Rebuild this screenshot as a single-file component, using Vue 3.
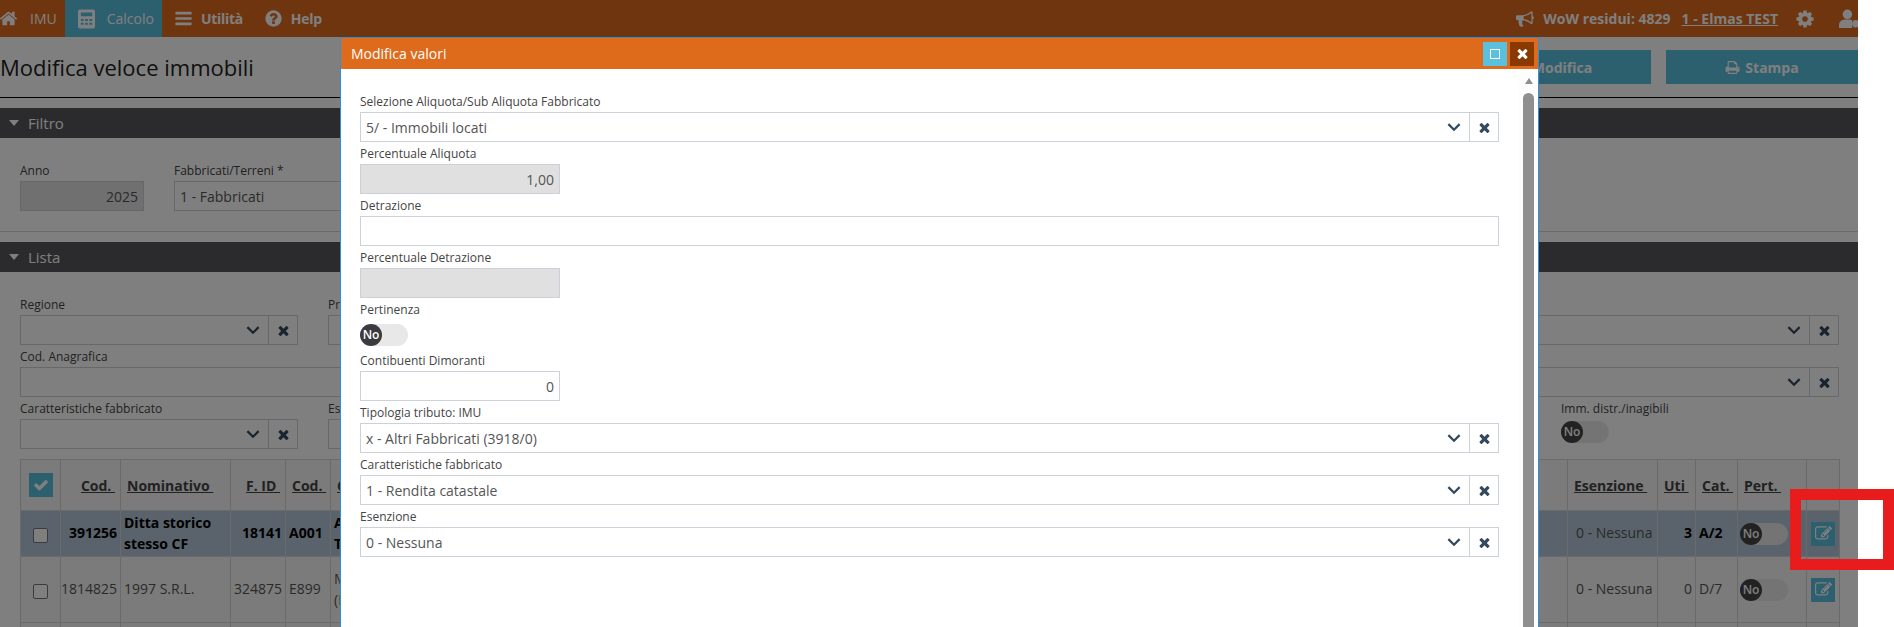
<template>
  <div class="page">
    <!-- Top navigation -->
    <header class="nav">
      <a class="nav__item nav__item--first"><svg class="ico ico--home" viewBox="0 0 1792 1792"><path :d="icons.home" /></svg><span>IMU</span></a>
      <a class="nav__item nav__item--active">
        <svg class="ico ico--calc" viewBox="0 0 18 20"><path fill-rule="evenodd" d="M2 0h14a2 2 0 0 1 2 2v16a2 2 0 0 1-2 2H2a2 2 0 0 1-2-2V2a2 2 0 0 1 2-2zM3 3v4h12V3zM3 10v2h3v-2zM7.500 10v2h3v-2zM12 10v2h3v-2zM3 14v2h3v-2zM7.500 14v2h3v-2zM12 14v2h3v-2z" /></svg>
        <span>Calcolo</span>
      </a>
      <a class="nav__item nav__item--bold"><svg class="ico" viewBox="0 0 1792 1792"><path :d="icons.bars" /></svg><span>Utilità</span></a>
      <a class="nav__item nav__item--bold"><svg class="ico" viewBox="0 0 1792 1792"><path :d="icons.help" /></svg><span>Help</span></a>
      <div class="nav__right">
        <svg class="ico ico--horn" viewBox="0 0 1792 1792"><path :d="icons.horn" /></svg>
        <strong class="nav__wow">WoW residui: 4829</strong>
        <a class="nav__user">1 - Elmas TEST</a>
        <svg class="ico ico--cog" viewBox="0 0 1792 1792"><path :d="icons.cog" /></svg>
        <svg class="ico ico--usercog" viewBox="0 0 20 18"><circle cx="8" cy="5" r="4.500" /><path d="M0 18v-2.500C0 12 3 10 6 10h4c1 0 2 .3 2.500 .7V18z" /><circle cx="16" cy="14" r="3.500" /></svg>
      </div>
    </header>

    <!-- Title and actions -->
    <div class="head">
      <h1 class="head__title">Modifica veloce immobili</h1>
      <div class="head__actions">
        <button class="action"><svg class="ico ico--pencil" viewBox="0 0 1792 1792"><path :d="icons.edit" /></svg>Modifica</button>
        <button class="action"><svg class="ico ico--print" viewBox="0 0 1792 1792"><path :d="icons.print" /></svg>Stampa</button>
      </div>
    </div>

    <!-- Filtro -->
    <section class="panel panel--filter">
      <h2 class="bar"><i class="bar__caret"></i>Filtro</h2>
      <div class="filter-row">
        <div class="field field--anno">
          <label>Anno</label>
          <div class="input input--off input--num">2025</div>
        </div>
        <div class="field field--tipo">
          <label>Fabbricati/Terreni *</label>
          <div class="input">1 - Fabbricati</div>
        </div>
      </div>
    </section>

    <!-- Lista -->
    <section class="panel">
      <h2 class="bar"><i class="bar__caret"></i>Lista</h2>
      <div class="list-filters">
        <div class="list-row">
          <div class="field field--side">
            <label>Regione</label>
            <div class="select"><div class="select__value"></div><span class="select__arrow"><svg viewBox="0 0 12 8"><path d="M1 1l5 5 5-5" /></svg></span><span class="select__clear"><svg viewBox="0 0 1792 1792"><path :d="icons.times" /></svg></span></div>
          </div>
          <div class="field field--grow">
            <label>Provincia</label>
            <div class="select"><div class="select__value"></div><span class="select__arrow"><svg viewBox="0 0 12 8"><path d="M1 1l5 5 5-5" /></svg></span><span class="select__clear"><svg viewBox="0 0 1792 1792"><path :d="icons.times" /></svg></span></div>
          </div>
        </div>
        <div class="list-row">
          <div class="field field--code">
            <label>Cod. Anagrafica</label>
            <div class="input"></div>
          </div>
          <div class="field field--grow">
            <label>Comune</label>
            <div class="select"><div class="select__value"></div><span class="select__arrow"><svg viewBox="0 0 12 8"><path d="M1 1l5 5 5-5" /></svg></span><span class="select__clear"><svg viewBox="0 0 1792 1792"><path :d="icons.times" /></svg></span></div>
          </div>
        </div>
        <div class="list-row">
          <div class="field field--side">
            <label>Caratteristiche fabbricato</label>
            <div class="select"><div class="select__value"></div><span class="select__arrow"><svg viewBox="0 0 12 8"><path d="M1 1l5 5 5-5" /></svg></span><span class="select__clear"><svg viewBox="0 0 1792 1792"><path :d="icons.times" /></svg></span></div>
          </div>
          <div class="field field--grow">
            <label>Esenzione</label>
            <div class="select"><div class="select__value"></div><span class="select__arrow"><svg viewBox="0 0 12 8"><path d="M1 1l5 5 5-5" /></svg></span><span class="select__clear"><svg viewBox="0 0 1792 1792"><path :d="icons.times" /></svg></span></div>
          </div>
          <div class="field field--toggle">
            <label>Imm. distr./inagibili</label>
            <div class="toggle"><span class="toggle__knob">No</span></div>
          </div>
        </div>
      </div>

      <table class="grid">
        <colgroup>
          <col v-for="(w, i) in colWidths" :key="i" :style="{ width: w + 'px' }" />
        </colgroup>
        <thead>
          <tr>
            <th class="c"><span class="check-all"><svg viewBox="0 0 1792 1792"><path :d="icons.check" /></svg></span></th>
            <th class="r"><u>Cod.&nbsp;</u></th>
            <th><u>Nominativo&nbsp;</u></th>
            <th class="r"><u>F. ID&nbsp;</u></th>
            <th><u>Cod.&nbsp;</u></th>
            <th><u>Contribuente&nbsp;</u></th>
            <th><u>Esenzione&nbsp;</u></th>
            <th><u>Uti&nbsp;</u></th>
            <th><u>Cat.&nbsp;</u></th>
            <th><u>Pert.&nbsp;</u></th>
            <th></th>
          </tr>
        </thead>
        <tbody>
          <tr v-for="(row, idx) in rows" :key="idx" :class="{ 'is-selected': row.selected }" :style="{ height: row.height + 'px' }">
            <td class="c"><span v-if="row.id" class="check"></span></td>
            <td class="r">{{ row.id }}</td>
            <td>{{ row.name }}</td>
            <td class="r">{{ row.fid }}</td>
            <td>{{ row.code }}</td>
            <td class="addr">{{ row.address }}</td>
            <td class="muted">{{ row.exempt }}</td>
            <td class="r">{{ row.uti }}</td>
            <td>{{ row.cat }}</td>
            <td class="pert"><div v-if="row.id" class="toggle"><span class="toggle__knob">No</span></div></td>
            <td class="c"><span v-if="row.id" class="edit"><svg viewBox="0 0 1792 1792"><path :d="icons.edit" /></svg></span></td>
          </tr>
        </tbody>
      </table>
    </section>

    <div class="overlay"></div>

    <!-- Dialog -->
    <div class="modal">
      <div class="modal__head">
        <span class="modal__title">Modifica valori</span>
        <span class="modal__btn modal__btn--max"><i></i></span>
        <span class="modal__btn modal__btn--close"><svg viewBox="0 0 1792 1792"><path :d="icons.times" /></svg></span>
      </div>
      <div class="modal__body">
        <div class="modal__form">
          <template v-for="f in modalFields" :key="f.label">
            <div class="field" :class="{ 'field--small': f.type === 'small' || f.type === 'off' }">
              <label>{{ f.label }}</label>
              <div v-if="f.type === 'select'" class="select">
                <div class="select__value">{{ f.value }}</div>
                <span class="select__arrow"><svg viewBox="0 0 12 8"><path d="M1 1l5 5 5-5" /></svg></span>
                <span class="select__clear"><svg viewBox="0 0 1792 1792"><path :d="icons.times" /></svg></span>
              </div>
              <div v-else-if="f.type === 'toggle'" class="toggle toggle--form"><span class="toggle__knob">No</span></div>
              <div v-else class="input" :class="{ 'input--off': f.type === 'off', 'input--num': f.type !== 'text' }">{{ f.value }}</div>
            </div>
          </template>
        </div>
        <div class="modal__rail">
          <i class="modal__up"></i>
          <div class="modal__thumb"></div>
        </div>
      </div>
    </div>

    <!-- Red marker drawn over the screenshot -->
    <div class="marker"></div>
  </div>
</template>

<script setup>
const icons = {
  home: 'M1472 992v480q0 26-19 45t-45 19h-384v-384h-256v384h-384q-26 0-45-19t-19-45v-480q0-1 .5-3t.5-3l575-474 575 474q1 2 1 6zm223-69l-62 74q-8 9-21 11h-3q-13 0-21-7l-692-577-692 577q-12 8-24 7-13-2-21-11l-62-74q-8-10-7-23.5t11-21.5l719-599q32-26 76-26t76 26l244 204v-195q0-14 9-23t23-9h192q14 0 23 9t9 23v408l219 182q10 8 11 21.5t-7 23.5z',
  bars: 'M1664 1344v128q0 26-19 45t-45 19h-1408q-26 0-45-19t-19-45v-128q0-26 19-45t45-19h1408q26 0 45 19t19 45zm0-512v128q0 26-19 45t-45 19h-1408q-26 0-45-19t-19-45v-128q0-26 19-45t45-19h1408q26 0 45 19t19 45zm0-512v128q0 26-19 45t-45 19h-1408q-26 0-45-19t-19-45v-128q0-26 19-45t45-19h1408q26 0 45 19t19 45z',
  help: 'M1024 1376v-192q0-14-9-23t-23-9h-192q-14 0-23 9t-9 23v192q0 14 9 23t23 9h192q14 0 23-9t9-23zm256-672q0-88-55.5-163t-138.5-116-170-41q-243 0-371 213-15 24 8 42l132 100q7 6 19 6 16 0 25-12 53-68 86-92 34-24 86-24 48 0 85.5 26t37.5 59q0 38-20 61t-68 45q-63 28-115.5 86.5t-52.5 125.5v36q0 14 9 23t23 9h192q14 0 23-9t9-23q0-19 21.5-49.5t54.5-49.5q32-18 49-28.5t46-35 44.5-48 28-60.5 12.5-81zm384 192q0 209-103 385.5t-279.5 279.5-385.5 103-385.5-103-279.5-279.5-103-385.5 103-385.5 279.5-279.5 385.5-103 385.5 103 279.5 279.5 103 385.5z',
  horn: 'M1664 640q53 0 90.5 37.5t37.5 90.5-37.5 90.5-90.5 37.5v384q0 52-38 90t-90 38q-417-347-812-380-58 19-91 66t-31 100.5 40 92.5q-20 33-23 65.5t6 58 33.5 55 48 50 61.5 50.5q-29 58-111.5 83t-168.5 11.5-132-55.5q-7-23-29.5-87.5t-32-94.5-23-89-15-101 3.5-98.5 22-110.5h-122q-66 0-113-47t-47-113v-192q0-66 47-113t113-47h480q435 0 896-384 52 0 90 38t38 90v384zm-128 604v-954q-394 302-768 343v270q377 42 768 341z',
  cog: 'M1152 896q0-106-75-181t-181-75-181 75-75 181 75 181 181 75 181-75 75-181zm512-109v222q0 12-8 23t-20 13l-185 28q-19 54-39 91 35 50 107 138 10 12 10 25t-9 23q-27 37-99 108t-94 71q-12 0-26-9l-138-108q-44 23-91 38-16 136-29 186-7 28-36 28h-222q-14 0-24.5-8.500t-11.5-21.500l-28-184q-49-16-90-37l-141 107q-10 9-25 9-14 0-25-11-126-114-165-168-7-10-7-23 0-12 8-23 15-21 51-66.500t54-70.500q-27-50-41-99l-183-27q-13-2-21-12.500t-8-23.500v-222q0-12 8-23t19-13l186-28q14-46 39-92-40-57-107-138-10-12-10-24 0-10 9-23 26-36 98.500-107.500t94.500-71.500q13 0 26 10l138 107q44-23 91-38 16-136 29-186 7-28 36-28h222q14 0 24.500 8.500t11.500 21.500l28 184q49 16 90 37l142-107q9-9 24-9 13 0 25 10 129 119 165 170 7 8 7 22 0 12-8 23-15 21-51 66.500t-54 70.500q26 50 41 98l183 28q13 2 21 12.500t8 23.500z',
  print: 'M448 1536h896v-256h-896v256zm0-640h896v-384h-160q-40 0-68-28t-28-68v-160h-640v640zm1152 64q0-26-19-45t-45-19-45 19-19 45 19 45 45 19 45-19 19-45zm128 0v416q0 13-9.5 22.5t-22.5 9.5h-224v160q0 40-28 68t-68 28h-960q-40 0-68-28t-28-68v-160h-224q-13 0-22.5-9.5t-9.5-22.5v-416q0-79 56.5-135.5t135.5-56.5h64v-544q0-40 28-68t68-28h672q40 0 88 20t76 48l152 152q28 28 48 76t20 88v256h64q79 0 135.5 56.5t56.5 135.5z',
  times: 'M1490 1322q0 40-28 68l-136 136q-28 28-68 28t-68-28l-294-294-294 294q-28 28-68 28t-68-28l-136-136q-28-28-28-68t28-68l294-294-294-294q-28-28-28-68t28-68l136-136q28-28 68-28t68 28l294 294 294-294q28-28 68-28t68 28l136 136q28 28 28 68t-28 68l-294 294 294 294q28 28 28 68z',
  check: 'M1671 566q0 40-28 68l-724 724-136 136q-28 28-68 28t-68-28l-136-136-362-362q-28-28-28-68t28-68l136-136q28-28 68-28t68 28l294 295 656-657q28-28 68-28t68 28l136 136q28 28 28 68z',
  edit: 'M888 1184l116-116-152-152-116 116v56h96v96h56zm440-720q-16-16-33 1l-350 350q-17 17-1 33t33-1l350-350q17-17 1-33zm80 594v190q0 119-84.5 203.5t-203.5 84.5h-832q-119 0-203.5-84.5t-84.5-203.5v-832q0-119 84.5-203.5t203.5-84.5h832q63 0 117 25 15 7 18 23 3 17-9 29l-49 49q-14 14-32 8-23-6-45-6h-832q-66 0-113 47t-47 113v832q0 66 47 113t113 47h832q66 0 113-47t47-113v-126q0-13 9-22l64-64q15-15 35-7t20 29zm-96-738l288 288-672 672h-288v-288zm444 132l-92 92-288-288 92-92q28-28 68-28t68 28l152 152q28 28 28 68t-28 68z',
}

const colWidths = [40, 60, 110, 55, 45, 1237, 90, 38, 42, 69, 33]

const rows = [
  { id: '391256', name: 'Ditta storico stesso CF', fid: '18141', code: 'A001', address: 'Abano\nTerme', exempt: '0 - Nessuna', uti: '3', cat: 'A/2', selected: true, height: 46 },
  { id: '1814825', name: '1997 S.R.L.', fid: '324875', code: 'E899', address: 'Mantova\n(MN)', exempt: '0 - Nessuna', uti: '0', cat: 'D/7', height: 66 },
  { id: '', name: '', fid: '', code: '', address: '', exempt: '', uti: '', cat: '', height: 66 },
]

const modalFields = [
  { label: 'Selezione Aliquota/Sub Aliquota Fabbricato', type: 'select', value: '5/ - Immobili locati' },
  { label: 'Percentuale Aliquota', type: 'off', value: '1,00' },
  { label: 'Detrazione', type: 'text', value: '' },
  { label: 'Percentuale Detrazione', type: 'off', value: '' },
  { label: 'Pertinenza', type: 'toggle' },
  { label: 'Contibuenti Dimoranti', type: 'small', value: '0' },
  { label: 'Tipologia tributo: IMU', type: 'select', value: 'x - Altri Fabbricati (3918/0)' },
  { label: 'Caratteristiche fabbricato', type: 'select', value: '1 - Rendita catastale' },
  { label: 'Esenzione', type: 'select', value: '0 - Nessuna' },
]
</script>

<style>
html, body { background: #fff; overflow: hidden; }
</style>

<style scoped>
.page {
  position: relative;
  width: 1858px;
  height: 627px;
  overflow: hidden;
  background: #fff;
  font-family: "Open Sans", sans-serif;
  font-size: 14px;
  color: #444;
}

.ico { fill: currentColor; display: block; flex-shrink: 0; }

/* ─── Nav ─────────────────────────────── */
.nav {
  display: flex;
  align-items: center;
  height: 37px;
  background: #de6a1c;
  color: #fff;
}
.nav__item {
  display: flex;
  align-items: center;
  height: 100%;
  gap: 11px;
  padding: 0 8px 0 13px;
  font-size: 14px;
  white-space: nowrap;
}
.nav__item .ico { width: 19px; height: 19px; }
.nav__item--first { padding-left: 0; gap: 12px; }
.nav__item--first .ico { margin-left: -1px; }
.nav__item--active { background: #5bc0de; gap: 12px; padding-right: 8px; }
.nav__item .ico--calc { width: 17px; height: 20px; }
.nav__item--bold { font-weight: 700; gap: 8px; padding: 0 9px 0 12px; letter-spacing: -.3px; }
.nav__right {
  margin-left: auto;
  display: flex;
  align-items: center;
  font-size: 14px;
  color: #fff;
}
.ico--horn { width: 18px; height: 18px; margin-right: 9px; }
.nav__wow { font-weight: 700; margin-right: 11px; }
.nav__user { font-weight: 700; text-decoration: underline; margin-right: 17px; }
.ico--cog { width: 20px; height: 20px; margin-right: 24px; }
.ico--usercog { width: 21px; height: 19px; margin-right: -2px; }

/* ─── Title ───────────────────────────── */
.head {
  display: flex;
  align-items: center;
  justify-content: space-between;
  height: 60px;
  border-bottom: 1px solid #000;
}
.head__title {
  margin: 0;
  font-size: 22px;
  font-weight: 400;
  color: #222;
}
.head__actions { display: flex; gap: 15px; }
.action {
  display: flex;
  align-items: center;
  justify-content: center;
  gap: 5px;
  width: 192px;
  height: 34px;
  border: 0;
  padding: 0;
  background: #5bc0de;
  color: #fff;
  font: 700 14px "Open Sans", sans-serif;
}
.ico--print { width: 15px; height: 15px; }
.ico--pencil { width: 14px; height: 14px; margin-right: -5px; }

/* ─── Panels ──────────────────────────── */
.panel { margin-top: 10px; }
.panel--filter { border-bottom: 1px solid #d4d4d4; padding-bottom: 20px; }
.bar {
  display: flex;
  align-items: center;
  gap: 9px;
  height: 30px;
  margin: 0;
  padding-left: 9px;
  background: #57575a;
  color: #fff;
  font-size: 15px;
  font-weight: 400;
}
.bar__caret {
  width: 0;
  height: 0;
  border: 5px solid transparent;
  border-top: 6px solid #fff;
  border-bottom: 0;
}

.filter-row { display: flex; gap: 30px; padding: 21px 20px 0; }
.field label {
  display: block;
  height: 22px;
  line-height: 23px;
  font-size: 12px;
  color: #444;
  white-space: nowrap;
}
.field--anno { width: 124px; }
.field--tipo { width: 600px; }

.input {
  height: 30px;
  line-height: 29px;
  padding: 0 5px;
  border: 1px solid #ccd0d8;
  background: #fff;
  box-sizing: border-box;
  color: #555;
}
.input--off { background: #e0e0e0; }
.input--num { text-align: right; }

.select { display: flex; height: 30px; border: 1px solid #ccd0d8; box-sizing: border-box; background: #fff; }
.select__value { flex: 1; padding-left: 5px; line-height: 29px; color: #555; white-space: nowrap; }
.select__arrow { display: flex; align-items: center; justify-content: center; width: 30px; }
.select__arrow svg { width: 14px; height: 9px; fill: none; stroke: #34495e; stroke-width: 2; }
.select__clear {
  display: flex;
  align-items: center;
  justify-content: center;
  width: 29px;
  border-left: 1px solid #ccd0d8;
  box-sizing: border-box;
}
.select__clear svg { width: 15px; height: 15px; fill: #34495e; }

.list-filters { padding: 21px 19px 0 20px; }
.list-row { display: flex; gap: 30px; }
.field--side { width: 278px; flex-shrink: 0; }
.field--code { width: 600px; flex-shrink: 0; }
.field--grow { flex: 1; min-width: 0; }
.field--toggle { width: 278px; flex-shrink: 0; }

.toggle {
  position: relative;
  width: 48px;
  height: 22px;
  margin-top: 2px;
  border-radius: 11px;
  background: #e8e8e8;
}
.toggle__knob {
  display: block;
  width: 22px;
  height: 22px;
  border-radius: 50%;
  background: #444;
  color: #fff;
  font-size: 12px;
  font-weight: 600;
  line-height: 22px;
  text-align: center;
}
.toggle--form { margin: 4px 0 3px; }
.toggle--form .toggle__knob { background: #3a3a3f; }

/* ─── Table ───────────────────────────── */
.grid {
  table-layout: fixed;
  width: 1819px;
  margin: 10px 0 0 20px;
  border-collapse: collapse;
  background: #f6f6f6;
}
.grid th, .grid td {
  border: 1px solid #d4d4d4;
  overflow: hidden;
}
.grid th {
  height: 50px;
  padding: 0 5px 0 6px;
  text-align: left;
  font-weight: 700;
  font-size: 14px;
  color: #444;
}
.grid td { padding: 0 3px 2px; line-height: 21px; font-size: 14px; color: #555; }
.grid .r { text-align: right; }
.grid td.r { padding-left: 0; }
.grid .c, .grid td.c { text-align: center; padding: 0; }
.grid td.pert { padding: 0 2px; }
.grid .addr { white-space: pre-line; }
.grid td.muted { padding-left: 8px; color: #555; font-weight: 400; }
.is-selected { background: #b4c6d6; }
.is-selected td { font-weight: 700; color: #000; }
.grid td.pert .toggle { margin: 0; }

.check-all {
  display: inline-flex;
  align-items: center;
  justify-content: center;
  width: 24px;
  height: 24px;
  vertical-align: middle;
  background: #5bc0de;
}
.check-all svg { width: 16px; height: 16px; fill: #fff; }
.check {
  display: inline-block;
  width: 13px;
  height: 13px;
  border: 1px solid #777;
  border-radius: 2px;
  background: #fff;
  vertical-align: middle;
}
.edit {
  display: inline-flex;
  align-items: center;
  justify-content: center;
  width: 24px;
  height: 24px;
  vertical-align: middle;
  background: #5bc0de;
}
.edit svg { width: 17px; height: 17px; fill: #fff; }

/* ─── Overlay + dialog ────────────────── */
.overlay {
  position: absolute;
  inset: 0;
  background: rgba(0, 0, 0, .5);
}
.modal {
  position: absolute;
  left: 340px;
  top: 37px;
  width: 1199px;
  height: 600px;
  box-sizing: border-box;
  border: 1px solid #2b90e0;
  background: #fff;
}
.modal__head {
  display: flex;
  align-items: center;
  gap: 3px;
  height: 31px;
  padding: 0 4px 0 10px;
  background: #de6a1c;
  color: #fff;
}
.modal__title { flex: 1; font-size: 14px; }
.modal__btn {
  display: flex;
  align-items: center;
  justify-content: center;
  width: 24px;
  height: 24px;
}
.modal__btn--max { background: #5bc0de; }
.modal__btn--max i { width: 8px; height: 8px; border: 1.500px solid #fff; }
.modal__btn--close { background: #8a3a00; }
.modal__btn--close svg { width: 15px; height: 15px; fill: #fff; }
.modal__body { display: flex; height: calc(100% - 31px); }
.modal__form { flex: 1; padding: 21px 20px 0 19px; }
.field--small { width: 200px; }
.modal__rail {
  display: flex;
  flex-direction: column;
  align-items: center;
  width: 19px;
  box-sizing: border-box;
  padding: 9px 4px 0;
  background: #fdfdfd;
}
.modal__up {
  width: 0;
  height: 0;
  border: 4.500px solid transparent;
  border-top: 0;
  border-bottom: 6px solid #8f8f8f;
  margin-bottom: 9px;
}
.modal__thumb {
  flex: 1;
  width: 11px;
  background: #8f8f8f;
  border-radius: 6px 6px 0 0;
}

.marker {
  position: fixed;
  left: 1790px;
  top: 489px;
  width: 104px;
  height: 81px;
  box-sizing: border-box;
  border: 11px solid #e81c1c;
}
</style>
